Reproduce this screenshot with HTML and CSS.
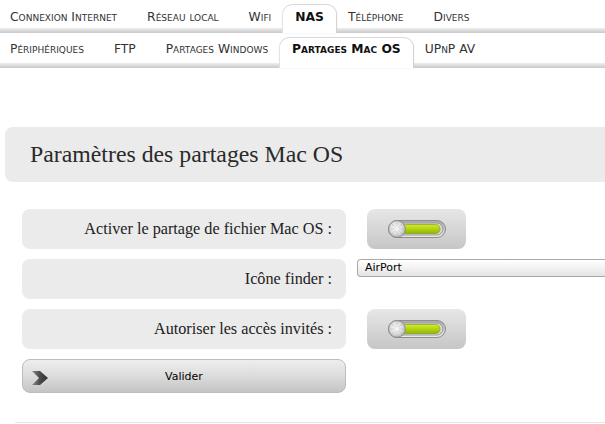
FILE: index.html
```html
<!DOCTYPE html>
<html lang="fr">
<head>
<meta charset="utf-8">
<title>NAS - Partages Mac OS</title>
<link rel="stylesheet" href="styles.css">
</head>
<body>
<nav class="tabs tabs-main">
  <a class="tab">Connexion Internet</a>
  <a class="tab">Réseau local</a>
  <a class="tab">Wifi</a>
  <a class="tab active">NAS</a>
  <a class="tab">Téléphone</a>
  <a class="tab">Divers</a>
</nav>
<nav class="tabs tabs-sub">
  <a class="tab">Périphériques</a>
  <a class="tab">FTP</a>
  <a class="tab">Partages Windows</a>
  <a class="tab active">Partages Mac OS</a>
  <a class="tab">UPnP AV</a>
</nav>
<main class="content">
  <h1 class="panel-title">Paramètres des partages Mac OS</h1>
  <form class="form">
    <div class="row">
      <label class="label">Activer le partage de fichier Mac OS :</label>
      <button type="button" class="toggle" aria-label="Activer">
        <svg width="58" height="18" viewBox="0 0 58 18">
          <defs>
            <linearGradient id="pg1" x1="0" y1="0" x2="0" y2="1"><stop offset="0" stop-color="#a9a9a9"/><stop offset="1" stop-color="#ececec"/></linearGradient>
            <linearGradient id="gg1" x1="0" y1="0" x2="0" y2="1"><stop offset="0" stop-color="#d4ec2a"/><stop offset="1" stop-color="#90b800"/></linearGradient>
            <radialGradient id="kg1" cx="0.45" cy="0.45" r="0.6"><stop offset="0" stop-color="#ffffff"/><stop offset="0.6" stop-color="#dcdcdc"/><stop offset="1" stop-color="#a8a8a8"/></radialGradient>
          </defs>
          <rect x="0.5" y="0.5" width="57" height="17" rx="8.5" fill="url(#pg1)" stroke="#8c8c8c"/>
          <rect x="3" y="3" width="52" height="12" rx="6" fill="#d6d6d6" stroke="#9a9a9a"/>
          <rect x="13" y="4.5" width="39" height="9" rx="4.5" fill="url(#gg1)" stroke="#7a9a00" stroke-width="0.6"/>
          <circle cx="9" cy="9" r="8.4" fill="url(#kg1)" stroke="#858585" stroke-width="0.8"/>
          <g stroke="#b8b8b8" stroke-width="0.5">
            <line x1="9" y1="1.5" x2="9" y2="16.5"/><line x1="1.5" y1="9" x2="16.5" y2="9"/>
            <line x1="3.7" y1="3.7" x2="14.3" y2="14.3"/><line x1="14.3" y1="3.7" x2="3.7" y2="14.3"/>
          </g>
          <circle cx="9" cy="9" r="2" fill="#f4f4f4"/>
        </svg>
      </button>
    </div>
    <div class="row">
      <label class="label">Icône finder :</label>
      <div class="select">AirPort</div>
    </div>
    <div class="row">
      <label class="label">Autoriser les accès invités :</label>
      <button type="button" class="toggle" aria-label="Autoriser">
        <svg width="58" height="18" viewBox="0 0 58 18">
          <defs>
            <linearGradient id="pg2" x1="0" y1="0" x2="0" y2="1"><stop offset="0" stop-color="#a9a9a9"/><stop offset="1" stop-color="#ececec"/></linearGradient>
            <linearGradient id="gg2" x1="0" y1="0" x2="0" y2="1"><stop offset="0" stop-color="#d4ec2a"/><stop offset="1" stop-color="#90b800"/></linearGradient>
            <radialGradient id="kg2" cx="0.45" cy="0.45" r="0.6"><stop offset="0" stop-color="#ffffff"/><stop offset="0.6" stop-color="#dcdcdc"/><stop offset="1" stop-color="#a8a8a8"/></radialGradient>
          </defs>
          <rect x="0.5" y="0.5" width="57" height="17" rx="8.5" fill="url(#pg2)" stroke="#8c8c8c"/>
          <rect x="3" y="3" width="52" height="12" rx="6" fill="#d6d6d6" stroke="#9a9a9a"/>
          <rect x="13" y="4.5" width="39" height="9" rx="4.5" fill="url(#gg2)" stroke="#7a9a00" stroke-width="0.6"/>
          <circle cx="9" cy="9" r="8.4" fill="url(#kg2)" stroke="#858585" stroke-width="0.8"/>
          <g stroke="#b8b8b8" stroke-width="0.5">
            <line x1="9" y1="1.5" x2="9" y2="16.5"/><line x1="1.5" y1="9" x2="16.5" y2="9"/>
            <line x1="3.7" y1="3.7" x2="14.3" y2="14.3"/><line x1="14.3" y1="3.7" x2="3.7" y2="14.3"/>
          </g>
          <circle cx="9" cy="9" r="2" fill="#f4f4f4"/>
        </svg>
      </button>
    </div>
    <button type="submit" class="submit">
      <svg class="chevron" width="16" height="14" viewBox="0 0 16 14">
        <defs>
          <linearGradient id="cg" x1="0" y1="0" x2="1" y2="0"><stop offset="0" stop-color="#8a8a8a"/><stop offset="0.5" stop-color="#4a4a4a"/><stop offset="1" stop-color="#2e2e2e"/></linearGradient>
        </defs>
        <polygon points="0,0 8,0 16,7 8,14 0,14 7,7" fill="url(#cg)"/>
      </svg>
      <span>Valider</span>
    </button>
  </form>
  <hr class="footer-line">
</main>
</body>
</html>
```

FILE: styles.css
```css
html, body {
  margin: 0;
  padding: 0;
  background: #fff;
  overflow: hidden;
}

.tabs {
  display: flex;
  padding-left: 0;
  font-family: "DejaVu Sans", Verdana, sans-serif;
  font-size: 12.3px;
  font-variant: small-caps;
  color: #333;
}

.tabs-main {
  height: 33px;
  background: linear-gradient(to bottom, #fff 0, #fff 28px, #eeeeee 28px, #c9c9c9 33px);
}

.tabs-sub {
  height: 35px;
  background: linear-gradient(to bottom, #fff 0, #fff 30px, #eeeeee 30px, #c9c9c9 35px);
}

.tab {
  display: block;
  padding: 0 15px;
  color: #333;
  text-decoration: none;
  white-space: nowrap;
}

.tabs-main .tab {
  margin-top: 5px;
  height: 28px;
  line-height: 24px;
}

.tabs-sub .tab {
  margin-top: 5px;
  height: 30px;
  line-height: 22px;
}

.tabs-main .tab:first-child,
.tabs-sub .tab:first-child {
  padding-left: 10px;
}

.tab.active {
  background: #fff;
  font-weight: bold;
  color: #111;
  border-radius: 9px 9px 0 0;
  box-shadow: 0 -1px 0 #d8d8d8, -1px 0 1px #e2e2e2, 1px 0 1px #d0d0d0;
  padding: 0 12px;
  margin-left: -3px;
  margin-right: -3px;
  position: relative;
  z-index: 1;
}

.content {
  padding-left: 5px;
}

.panel-title {
  margin: 59px 0 0 0;
  height: 55px;
  background: #ebebeb;
  border-radius: 8px 0 0 8px;
  padding-left: 25px;
  font-family: "Liberation Serif", "Times New Roman", serif;
  font-weight: normal;
  font-size: 23.8px;
  line-height: 55px;
  color: #2a2a2a;
}

.form {
  margin-top: 27px;
  padding-left: 17px;
  display: flex;
  flex-direction: column;
  gap: 10px;
}

.row {
  display: flex;
  align-items: flex-start;
}

.label {
  width: 324px;
  height: 40px;
  box-sizing: border-box;
  background: #ebebeb;
  border-radius: 8px;
  padding-right: 14px;
  text-align: right;
  font-family: "Liberation Serif", "Times New Roman", serif;
  font-size: 16.2px;
  line-height: 40px;
  color: #222;
}

.toggle {
  margin-left: 21px;
  width: 99px;
  height: 40px;
  border: none;
  border-radius: 8px;
  background: linear-gradient(to bottom, #e7e7e7, #c6c6c6);
  display: flex;
  align-items: center;
  justify-content: center;
  padding: 0;
}

.toggle svg {
  display: block;
}

.select {
  margin-left: 11px;
  flex: 1;
  margin-right: -20px;
  height: 18px;
  box-sizing: border-box;
  border: 1px solid #a8a8a8;
  border-right: none;
  border-radius: 4px 0 0 4px;
  background: linear-gradient(to bottom, #ffffff, #f2f2f2 50%, #e4e4e4);
  padding-left: 7px;
  font-family: "DejaVu Sans", "Lucida Grande", sans-serif;
  font-size: 11px;
  line-height: 16px;
  color: #000;
}

.submit {
  position: relative;
  width: 324px;
  height: 34px;
  border: 1px solid #bcbcbc;
  border-radius: 8px;
  background: linear-gradient(to bottom, #eeeeee, #dcdcdc 50%, #c4c4c4);
  font-family: "DejaVu Sans", "Lucida Grande", sans-serif;
  font-size: 11px;
  color: #000;
  display: flex;
  align-items: center;
  justify-content: center;
  padding: 0;
}

.chevron {
  position: absolute;
  left: 9px;
  top: 11px;
}

.footer-line {
  margin: 29px 0 0 10px;
  border: none;
  height: 1px;
  background: #e6e6e6;
}
```
